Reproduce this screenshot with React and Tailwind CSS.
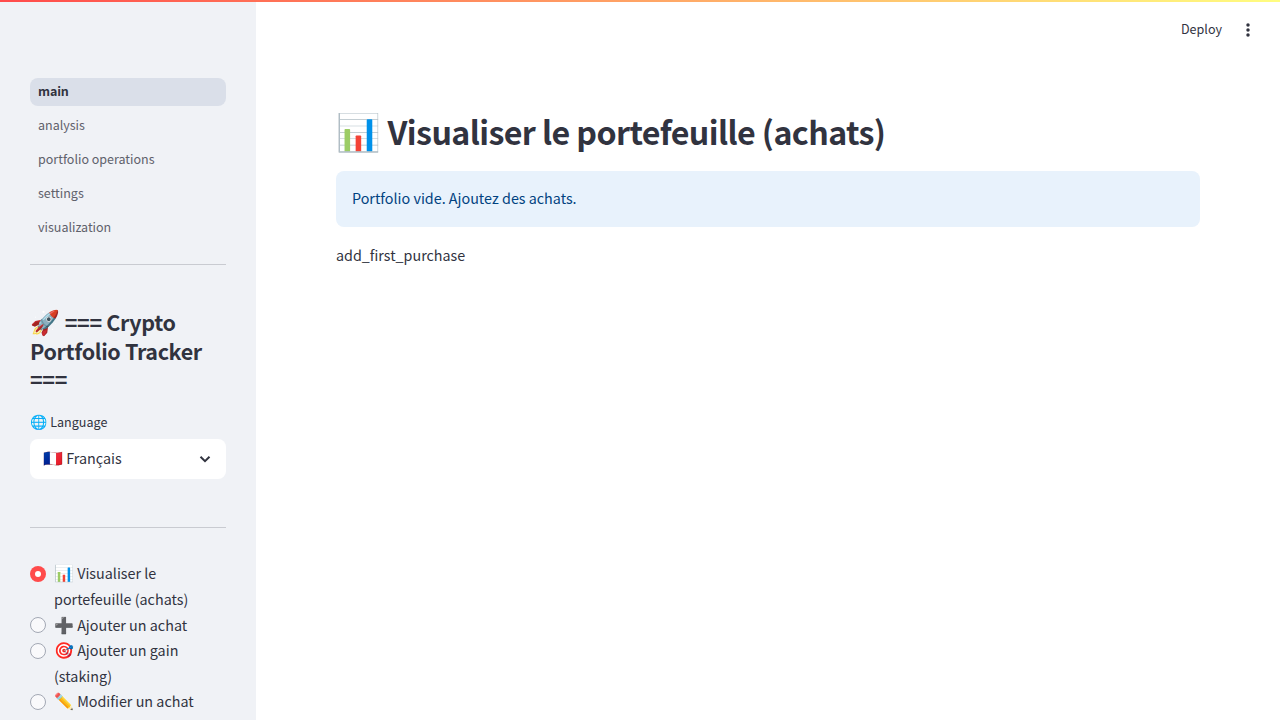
import React from "react";

const pages = ["analysis", "portfolio operations", "settings", "visualization"];

const actions = [
  { icon: "📊", lines: ["Visualiser le", "portefeuille (achats)"], checked: true },
  { icon: "➕", lines: ["Ajouter un achat"] },
  { icon: "🎯", lines: ["Ajouter un gain", "(staking)"] },
  { icon: "✏️", lines: ["Modifier un achat"] },
];

function Radio({ checked }) {
  return checked ? (
    <span className="mt-[5.600px] flex size-4 shrink-0 items-center justify-center rounded-full bg-[#ff4b4b]">
      <span className="size-1.5 rounded-full bg-white" />
    </span>
  ) : (
    <span className="mt-[5.600px] size-4 shrink-0 rounded-full border border-[#a3a8b4] bg-[#f9f9fb]" />
  );
}

function Sidebar() {
  return (
    <aside className="h-full w-64 shrink-0 overflow-hidden bg-[#f0f2f6] px-[30px] pt-[78px]">
      <nav className="flex flex-col gap-1.5 text-[12.5px] leading-[26px]">
        <a className="h-7 rounded-lg bg-[#dadfe9] px-2 font-bold tracking-[-0.15px]">main</a>
        {pages.map((page) => (
          <a key={page} className="h-7 px-2 text-[#5f616b]">{page}</a>
        ))}
      </nav>
      <div className="mt-[22px] h-px bg-[#c9cbd1]" />
      <h2 className="mt-[42.8px] whitespace-nowrap text-[21.5px] font-bold leading-[28.8px] tracking-[-0.36px]">
        <span className="text-[24px] leading-none tracking-normal">🚀</span>
        <span className="tracking-normal"> </span>=== Crypto
        <br />
        Portfolio Tracker
        <br />
        ===
      </h2>
      <div className="mt-[15.8px] h-6 whitespace-nowrap text-[12.55px] leading-6">
        <span className="text-[14px] leading-none">🌐</span> Language
      </div>
      <div className="mt-[5.4px] flex h-10 items-center justify-between rounded-lg bg-white pl-[13px] pr-3.5">
        <span className="whitespace-nowrap pb-0.5 text-[14.35px] leading-6">
          <span className="text-[16px] leading-none">🇫🇷</span> Français
        </span>
        <svg className="size-3.5" viewBox="0 0 14 14" fill="none" stroke="#31333f" strokeWidth="2">
          <path d="M2.5 4.700 7 9.100l4.500-4.400" />
        </svg>
      </div>
      <div className="mt-12 h-px bg-[#c9cbd1]" />
      <div className="mt-8 text-[14.35px] leading-[25.6px]">
        {actions.map((action) => (
          <div key={action.icon} className="flex gap-2">
            <Radio checked={action.checked} />
            <span className="whitespace-nowrap">
              <span className="text-[16px] leading-none">{action.icon}</span> {action.lines[0]}
              {action.lines[1] && <span className="block">{action.lines[1]}</span>}
            </span>
          </div>
        ))}
      </div>
    </aside>
  );
}

export default function App() {
  return (
    <div className="flex h-screen w-full flex-col overflow-hidden bg-white font-['Noto_Sans_CJK_SC','Noto_Color_Emoji',sans-serif] text-[#31333f]">
      <div className="relative z-10 -mb-0.5 h-0.5 shrink-0 bg-linear-to-r/srgb from-[#ff4b4b] to-[#fffd80]" />
      <div className="flex min-h-0 flex-1">
        <Sidebar />
        <main className="min-w-0 flex-1">
          <header className="flex h-[60px] items-center justify-end gap-[18px] pr-6">
            <span className="pb-0.5 text-[12.55px] leading-6">Deploy</span>
            <svg className="size-4" viewBox="0 0 16 16" fill="#31333f">
              <circle cx="8" cy="3" r="1.75" />
              <circle cx="8" cy="8" r="1.75" />
              <circle cx="8" cy="13" r="1.75" />
            </svg>
          </header>
          <section className="px-20 pt-[45px]">
            <h1 className="h-[52px] whitespace-nowrap text-[32.2px] font-bold leading-[52px] tracking-[-0.6px]">
              <span className="text-[36px] leading-none tracking-normal">📊</span>
              <span className="tracking-[-0.6px]"> </span>Visualiser le portefeuille (achats)
            </h1>
            <div className="mt-3.5 h-14 rounded-lg bg-[#e8f2fc] px-4 text-[14.33px] leading-[54px] text-[#004280]">
              Portfolio vide. Ajoutez des achats.
            </div>
            <p className="mt-[15px] text-[14.3px] leading-[25.6px]">add_first_purchase</p>
          </section>
        </main>
      </div>
    </div>
  );
}
